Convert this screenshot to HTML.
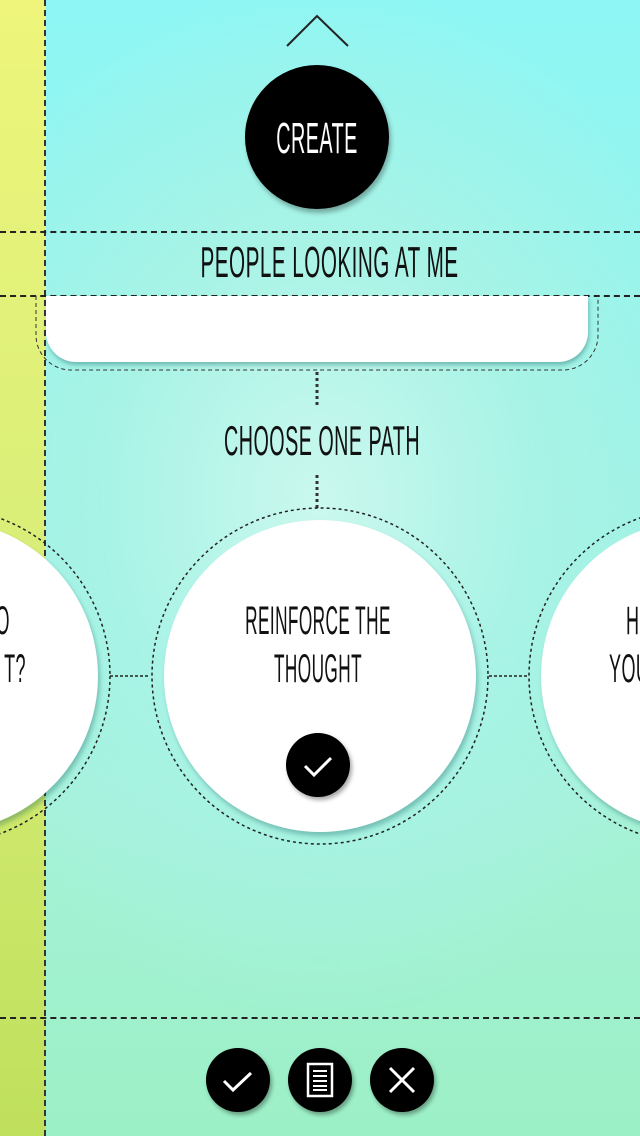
<!DOCTYPE html>
<html><head><meta charset="utf-8"><style>
*{margin:0;padding:0;box-sizing:border-box}
body{width:640px;height:1136px;overflow:hidden;position:relative;font-family:"Liberation Sans Narrow","Liberation Sans",sans-serif;
background:radial-gradient(ellipse 420px 520px at 320px 500px,#cbf8ee 0%,#a8f3e6 50%,rgba(160,240,220,0) 100%),linear-gradient(#8ef6f4 0%,#9af3e8 40%,#a6f2d8 70%,#9cf0c6 100%)}
.strip{position:absolute;left:0;top:0;width:46px;height:1136px;background:linear-gradient(#eef57a,#d8ee78 50%,#bfe05c);border-right:2px dashed #333}
.abs{position:absolute}
.t{position:absolute;color:#111;white-space:nowrap;text-align:center;transform:scaleX(.48);letter-spacing:1px}
.btn{position:absolute;width:64px;height:64px;border-radius:50%;background:#000;box-shadow:2px 3px 4px rgba(0,0,0,.35)}
</style></head><body>
<div class="strip"></div>
<div class="abs" style="left:0;top:231px;width:640px;border-top:2px dashed #222"></div>
<div class="abs" style="left:0;top:295px;width:640px;border-top:2px dashed #222"></div>
<div class="abs" style="left:0;top:1017px;width:640px;border-top:2px dashed #222"></div>
<svg class="abs" style="left:0;top:0" width="640" height="1136">
<polyline points="287,46 317,16 348,46" fill="none" stroke="#222" stroke-width="2"/>
<path d="M36,296 V335 A35,35 0 0 0 71,370 H563 A35,35 0 0 0 598,335 V296" fill="none" stroke="#333" stroke-width="1" stroke-dasharray="4,3"/>
<line x1="317" y1="372" x2="317" y2="406" stroke="#333" stroke-width="3" stroke-dasharray="3,3"/>
<line x1="317" y1="475" x2="317" y2="508" stroke="#333" stroke-width="3" stroke-dasharray="3,3"/>
<circle cx="-58" cy="676" r="168" fill="none" stroke="#222" stroke-width="1.5" stroke-dasharray="3,3"/>
<circle cx="320" cy="676" r="168" fill="none" stroke="#222" stroke-width="1.5" stroke-dasharray="3,3"/>
<circle cx="697" cy="676" r="168" fill="none" stroke="#222" stroke-width="1.5" stroke-dasharray="3,3"/>
<line x1="110" y1="676" x2="150" y2="676" stroke="#222" stroke-width="1.5" stroke-dasharray="3,2"/>
<line x1="489" y1="676" x2="528" y2="676" stroke="#222" stroke-width="1.5" stroke-dasharray="3,2"/>
</svg>
<div class="abs" style="left:46px;top:296px;width:542px;height:66px;background:#fff;border-radius:0 0 30px 30px;box-shadow:1px 3px 4px rgba(0,80,80,.35)"></div>
<div class="abs" style="left:-214px;top:520px;width:312px;height:312px;border-radius:50%;background:#fff;box-shadow:2px 4px 5px rgba(0,80,80,.3)"></div>
<div class="abs" style="left:164px;top:520px;width:312px;height:312px;border-radius:50%;background:#fff;box-shadow:2px 4px 5px rgba(0,80,80,.3)"></div>
<div class="abs" style="left:541px;top:520px;width:312px;height:312px;border-radius:50%;background:#fff;box-shadow:2px 4px 5px rgba(0,80,80,.3)"></div>
<div class="abs" style="left:245px;top:65px;width:144px;height:144px;border-radius:50%;background:#000;box-shadow:2px 4px 5px rgba(0,0,0,.3)"></div>
<div class="t" style="left:217px;top:114px;width:200px;font-size:44px;line-height:50px;color:#fff;transform:scaleX(.45)">CREATE</div>
<div class="t" style="left:68px;top:238px;width:500px;font-size:44px;line-height:50px;transform:scaleX(.47)">PEOPLE LOOKING AT ME</div>
<div class="t" style="left:118px;top:416px;width:400px;font-size:42px;line-height:50px;transform:scaleX(.47)">CHOOSE ONE PATH</div>
<div class="t" style="left:118px;top:596px;width:400px;font-size:40px;line-height:50px;transform:scaleX(.43)">REINFORCE THE</div>
<div class="t" style="left:118px;top:644px;width:400px;font-size:40px;line-height:50px;transform:scaleX(.43)">THOUGHT</div>
<div class="t" style="left:-190px;top:596px;width:200px;font-size:40px;line-height:50px;text-align:right;transform-origin:right;transform:scaleX(.45)">O</div>
<div class="t" style="left:-104px;top:644px;width:130px;font-size:40px;line-height:50px;text-align:right;transform-origin:right;transform:scaleX(.45)">T?</div>
<div class="t" style="left:626px;top:596px;width:200px;font-size:40px;line-height:50px;text-align:left;transform-origin:left;transform:scaleX(.45)">HO</div>
<div class="t" style="left:609px;top:644px;width:200px;font-size:40px;line-height:50px;text-align:left;transform-origin:left;transform:scaleX(.45)">YOU</div>
<div class="btn" style="left:286px;top:733px"><svg width="64" height="64"><polyline points="19,33 28,42 45,25" fill="none" stroke="#fff" stroke-width="3"/></svg></div>
<div class="btn" style="left:206px;top:1048px"><svg width="64" height="64"><polyline points="18,33 27,42 45,25" fill="none" stroke="#fff" stroke-width="3"/></svg></div>
<div class="btn" style="left:288px;top:1048px"><svg width="64" height="64"><rect x="20" y="16" width="24" height="32" fill="none" stroke="#fff" stroke-width="2.5"/><g stroke="#fff" stroke-width="2"><line x1="25" y1="23" x2="39" y2="23"/><line x1="25" y1="28" x2="39" y2="28"/><line x1="25" y1="33" x2="39" y2="33"/><line x1="25" y1="38" x2="39" y2="38"/><line x1="25" y1="42" x2="39" y2="42"/></g></svg></div>
<div class="btn" style="left:370px;top:1048px"><svg width="64" height="64"><g stroke="#fff" stroke-width="3"><line x1="20" y1="20" x2="44" y2="44"/><line x1="44" y1="20" x2="20" y2="44"/></g></svg></div>
</body></html>
